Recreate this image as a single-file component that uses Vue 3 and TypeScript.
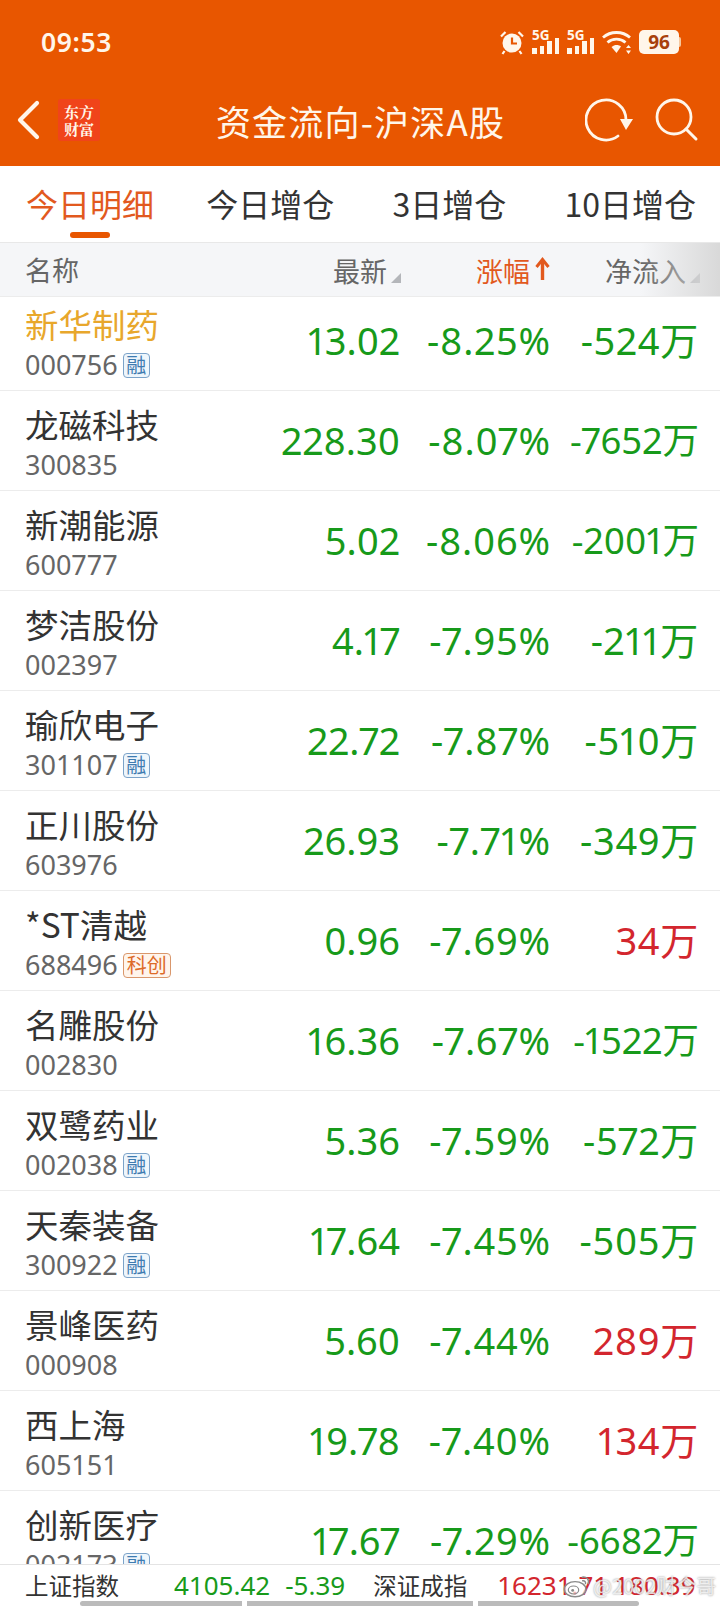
<script setup lang="ts">
interface Stock {
  name: string
  code: string
  price: string
  pct: string
  flow: string
  tag?: string
}

const tabs = ['今日明细', '今日增仓', '3日增仓', '10日增仓']

const stocks: Stock[] = [
  { name: '新华制药', code: '000756', price: '13.02', pct: '-8.25%', flow: '-524万', tag: '融' },
  { name: '龙磁科技', code: '300835', price: '228.30', pct: '-8.07%', flow: '-7652万' },
  { name: '新潮能源', code: '600777', price: '5.02', pct: '-8.06%', flow: '-2001万' },
  { name: '梦洁股份', code: '002397', price: '4.17', pct: '-7.95%', flow: '-211万' },
  { name: '瑜欣电子', code: '301107', price: '22.72', pct: '-7.87%', flow: '-510万', tag: '融' },
  { name: '正川股份', code: '603976', price: '26.93', pct: '-7.71%', flow: '-349万' },
  { name: '*ST清越', code: '688496', price: '0.96', pct: '-7.69%', flow: '34万', tag: '科创' },
  { name: '名雕股份', code: '002830', price: '16.36', pct: '-7.67%', flow: '-1522万' },
  { name: '双鹭药业', code: '002038', price: '5.36', pct: '-7.59%', flow: '-572万', tag: '融' },
  { name: '天秦装备', code: '300922', price: '17.64', pct: '-7.45%', flow: '-505万', tag: '融' },
  { name: '景峰医药', code: '000908', price: '5.60', pct: '-7.44%', flow: '289万' },
  { name: '西上海', code: '605151', price: '19.78', pct: '-7.40%', flow: '134万' },
  { name: '创新医疗', code: '002173', price: '17.67', pct: '-7.29%', flow: '-6682万', tag: '融' },
]
</script>

<template>
  <div class="page">
    <header class="top">
      <div class="status">
        <span class="time">09:53</span>
        <div class="status-icons">
          <svg width="26" height="26" viewBox="0 0 26 26" fill="none">
            <circle cx="13" cy="14" r="9.5" fill="#fff6ea" />
            <path d="M13 8.5V14.5H18" stroke="#e85600" stroke-width="2.2" />
            <path d="M2 7.5L6.5 3M24 7.5L19.5 3M5.5 22L3.5 25M20.5 22L22.5 25" stroke="#fff6ea" stroke-width="2.2" />
          </svg>
          <div v-for="n in 2" :key="n" class="signal">
            <span class="five-g">5G</span>
            <div class="bars">
              <i style="height: 6px"></i><i style="height: 8px"></i><i style="height: 13px"></i><i style="height: 16px"></i>
            </div>
          </div>
          <svg class="wifi" width="30" height="24" viewBox="0 0 30 24" fill="none">
            <path d="M1 7.5C8.5 .8 20.5 .8 28 7.5" stroke="#fff6ea" stroke-width="2.8" />
            <path d="M5.5 12.5C10.5 8 18.5 8 23.5 12.5" stroke="#fff6ea" stroke-width="2.8" />
            <path d="M9.5 17C12.5 14.4 16.5 14.4 19 16.5L14.5 23Z" fill="#fff6ea" />
            <path d="M26.5 15L29 18H24ZM26.5 24L29 20.5H24Z" fill="#fff6ea" />
          </svg>
          <div class="battery">96</div>
        </div>
      </div>
      <div class="navbar">
        <svg class="back" width="24" height="40" viewBox="0 0 24 40" fill="none">
          <path d="M21 3L4 20L21 37" stroke="#fff6ea" stroke-width="4.2" stroke-linecap="round" stroke-linejoin="round" />
        </svg>
        <div class="logo">东方<br />财富</div>
        <h1 class="title">资金流向-沪深A股</h1>
        <svg class="refresh" width="50" height="44" viewBox="0 0 50 44" fill="none">
          <path d="M41 22A20 20 0 1 0 33 38" stroke="#fff6ea" stroke-width="2.8" stroke-linecap="round" />
          <path d="M35 21H48L41 32Z" fill="#fff6ea" />
        </svg>
        <svg class="search" width="44" height="44" viewBox="0 0 44 44" fill="none">
          <circle cx="19" cy="19" r="17" stroke="#fff6ea" stroke-width="2.8" />
          <path d="M31 31L41 41" stroke="#fff6ea" stroke-width="3" stroke-linecap="round" />
        </svg>
      </div>
    </header>

    <nav class="tabs">
      <div v-for="(t, i) in tabs" :key="t" class="tab" :class="{ active: i === 0 }">{{ t }}</div>
    </nav>

    <div class="thead">
      <span class="th-name">名称</span>
      <span class="th sortable">最新</span>
      <span class="th current">涨幅
        <svg class="arrow" width="15" height="23" viewBox="0 0 15 23" fill="none">
          <path d="M7.5 3V23" stroke="#e2591e" stroke-width="3.4" />
          <path d="M1.5 10L7.5 2.5L13.5 10" stroke="#e2591e" stroke-width="3" />
        </svg>
      </span>
      <span class="th sortable">净流入</span>
      <div class="fade"></div>
    </div>

    <main class="list">
      <div class="list-inner">
        <div v-for="(s, i) in stocks" :key="s.code" class="row">
          <div class="cell-name">
            <div class="name" :class="{ viewed: i === 0 }">{{ s.name }}</div>
            <div class="code">
              {{ s.code }}
              <span v-if="s.tag" class="tag" :class="{ star: s.tag === '科创' }">{{ s.tag }}</span>
            </div>
          </div>
          <div class="num down">{{ s.price }}</div>
          <div class="num pct down">{{ s.pct }}</div>
          <div class="num flow" :class="[s.flow.startsWith('-') ? 'down' : 'up', { long: s.flow.length > 5 }]">{{ s.flow }}</div>
        </div>
      </div>
    </main>

    <footer class="index-bar">
      <div class="index-row">
        <span class="idx-name">上证指数</span>
        <span class="idx-num down first">4105.42</span>
        <span class="idx-num down second">-5.39</span>
        <span class="idx-name sz">深证成指</span>
        <span class="idx-num up third">16231.71</span>
        <span class="idx-num up fourth">180.39</span>
      </div>
      <div class="scroll-bars">
        <i class="b1"></i><i class="b2"></i><i class="b3"></i>
      </div>
    </footer>

    <div class="watermark">
      <svg width="29" height="24" viewBox="0 0 36 30" fill="none">
        <ellipse cx="15" cy="19" rx="13.5" ry="9.5" stroke="#8a8a8a" stroke-width="1.8" fill="rgba(255,255,255,.65)" />
        <ellipse cx="13" cy="20" rx="6.5" ry="5" stroke="#8a8a8a" stroke-width="1.5" />
        <circle cx="12" cy="20.5" r="1.8" fill="#8a8a8a" />
        <path d="M24 4C29 3 33 7 31.5 12M24.5 8.5C27 8 28.5 10 28 12" stroke="#8a8a8a" stroke-width="1.8" stroke-linecap="round" />
      </svg>
      <span>@2002财今哥</span>
    </div>
  </div>
</template>

<style scoped>
.page {
  position: relative;
  width: 720px;
  height: 1608px;
  overflow: hidden;
  display: flex;
  flex-direction: column;
  background: #fff;
  color: #333;
  font-family: "Noto Sans CJK SC", "Noto Sans", sans-serif;
}
.top {
  height: 166px;
  flex: none;
  background: #e85600;
  color: #fff6ea;
}
.status {
  height: 84px;
  box-sizing: border-box;
  padding: 0 41px;
  display: flex;
  align-items: center;
  justify-content: space-between;
}
.time {
  font: 600 26.5px "Noto Sans", sans-serif;
  letter-spacing: 0.6px;
}
.status-icons {
  display: flex;
  align-items: center;
  gap: 7px;
}
.signal {
  width: 28px;
  height: 24px;
  position: relative;
}
.five-g {
  display: block;
  font: 700 13.5px/11px "Noto Sans", sans-serif;
}
.bars {
  display: flex;
  align-items: flex-end;
  gap: 3px;
  position: absolute;
  left: 0;
  bottom: 0;
}
.bars i {
  width: 4.5px;
  background: #fff6ea;
}
.battery {
  position: relative;
  width: 40px;
  height: 24px;
  border-radius: 5px;
  background: #fff6ea;
  color: #a8400c;
  font: 700 19px/24px "Noto Sans", sans-serif;
  text-align: center;
}
.battery::after {
  content: "";
  position: absolute;
  right: -2px;
  top: 7px;
  width: 2px;
  height: 10px;
  background: #f6c89e;
  border-radius: 0 2px 2px 0;
}
.navbar {
  height: 82px;
  box-sizing: border-box;
  padding: 0 21px 10px 16px;
  display: flex;
  align-items: center;
}
.back {
  flex: none;
}
.logo {
  width: 42px;
  height: 42px;
  margin-left: 18px;
  flex: none;
  background: #f0441a;
  border-radius: 3px;
  color: #fff6ea;
  font: 700 15px/17px "Noto Serif CJK SC", "Noto Sans CJK SC", serif;
  text-align: center;
  padding-top: 4px;
  box-sizing: border-box;
}
.title {
  flex: 1;
  margin: 0;
  font-size: 35px;
  font-weight: 400;
  letter-spacing: 1.2px;
  text-align: center;
  padding-left: 36px;
  white-space: nowrap;
}
.refresh {
  flex: none;
  margin-right: 20px;
}
.search {
  flex: none;
}
.tabs {
  height: 77px;
  flex: none;
  box-sizing: border-box;
  padding: 0 24px 2px 26px;
  display: flex;
  align-items: center;
  justify-content: space-between;
  font-size: 32px;
  color: #333;
  border-bottom: 1px solid #e8e8e8;
}
.tab {
  position: relative;
}
.tab:nth-child(2) {
  margin-left: -6px;
}
.tab.active {
  color: #e2591e;
}
.tab.active::after {
  content: "";
  position: absolute;
  left: 50%;
  bottom: -12px;
  width: 40px;
  height: 6px;
  margin-left: -20px;
  border-radius: 3px;
  background: #e85600;
}
.thead {
  position: relative;
  height: 54px;
  flex: none;
  box-sizing: border-box;
  padding: 1px 20px 0 25px;
  display: grid;
  grid-template-columns: 1fr 147px 151px 148px;
  align-items: center;
  background: #f5f6f8;
  border-bottom: 1px solid #ececec;
  font-size: 27px;
  color: #666;
}
.th-name {
  margin-top: -2px;
}
.th {
  position: relative;
  text-align: right;
  white-space: nowrap;
}
.sortable {
  padding-right: 14px;
}
.sortable::after {
  content: "";
  position: absolute;
  right: 0;
  bottom: 7px;
  border-style: solid;
  border-width: 0 0 10px 10px;
  border-color: transparent transparent #b4b6ba transparent;
}
.current {
  color: #e2591e;
  padding-right: 22px;
}
.arrow {
  position: absolute;
  right: 2px;
  top: 6px;
}
.fade {
  position: absolute;
  top: 0;
  right: 0;
  bottom: 0;
  width: 80px;
  background: linear-gradient(to right, rgba(225, 225, 225, 0), rgba(215, 215, 215, 0.95));
}
.list {
  flex: 1;
  min-height: 0;
  overflow: hidden;
}
.list-inner {
  margin-top: -6px;
}
.row {
  height: 100px;
  box-sizing: border-box;
  padding: 0 21px 0 25px;
  display: grid;
  grid-template-columns: 1fr 147px 151px 148px;
  align-items: center;
  border-bottom: 1px solid #ececec;
}
.cell-name {
  white-space: nowrap;
  margin-top: 8px;
}
.name {
  font-size: 33.5px;
  line-height: 40px;
  color: #333;
}
.name.viewed {
  color: #e8a72c;
}
.code {
  display: flex;
  align-items: center;
  margin-top: 1px;
  font: 27px/40px "Noto Sans", sans-serif;
  color: #666;
}
.tag {
  margin-left: 5px;
  height: 25px;
  min-width: 27px;
  padding: 0 1px;
  box-sizing: border-box;
  border: 1px solid #7ba3c9;
  border-radius: 4px;
  background: #eef6fc;
  color: #3e7bb0;
  font: 20px/22px "Noto Sans CJK SC", sans-serif;
  text-align: center;
}
.tag.star {
  border-color: #d9976c;
  background: #fff5ec;
  color: #dd6a28;
  padding: 0 3px;
}
.num {
  margin-top: -2px;
  text-align: right;
  font: 38px/44px "Noto Sans", "Noto Sans CJK SC", sans-serif;
  font-variant-numeric: proportional-nums;
  white-space: nowrap;
}
.num.pct {
  letter-spacing: 0.8px;
}
.num.flow {
  letter-spacing: 0.7px;
}
.num.long {
  font-size: 36.5px;
  letter-spacing: 0;
}
.down {
  color: #179a1a;
}
.up {
  color: #d3262e;
}
.index-bar {
  height: 44px;
  flex: none;
  position: relative;
  z-index: 1;
  box-sizing: border-box;
  background: #fff;
  border-top: 1px solid #e4e4e4;
  display: flex;
  flex-direction: column;
}
.index-row {
  height: 36px;
  box-sizing: border-box;
  padding: 3px 0 0 25px;
  display: flex;
  align-items: center;
  white-space: nowrap;
}
.idx-name {
  font-size: 23.5px;
  color: #333;
}
.idx-num {
  font: 26px "Noto Sans", sans-serif;
}
.first {
  margin-left: 55px;
}
.second {
  margin-left: 15px;
}
.sz {
  margin-left: 28px;
}
.third {
  margin-left: 30px;
}
.fourth {
  margin-left: 6px;
}
.scroll-bars {
  padding-left: 80px;
  display: flex;
  gap: 5px;
}
.scroll-bars i {
  height: 5px;
  background: #bbb;
}
.b1 {
  width: 162px;
  border-radius: 3px 0 0 3px;
}
.b2 {
  width: 226px;
}
.b3 {
  width: 161px;
  border-radius: 0 3px 3px 0;
}
.watermark {
  position: absolute;
  left: 563px;
  bottom: 8px;
  z-index: 2;
  display: flex;
  align-items: center;
  gap: 1px;
  font: 20px "Noto Sans CJK SC", sans-serif;
  color: rgba(255, 255, 255, 0.75);
  text-shadow: 0 0 2px rgba(110, 110, 110, 0.8);
  white-space: nowrap;
}
</style>
